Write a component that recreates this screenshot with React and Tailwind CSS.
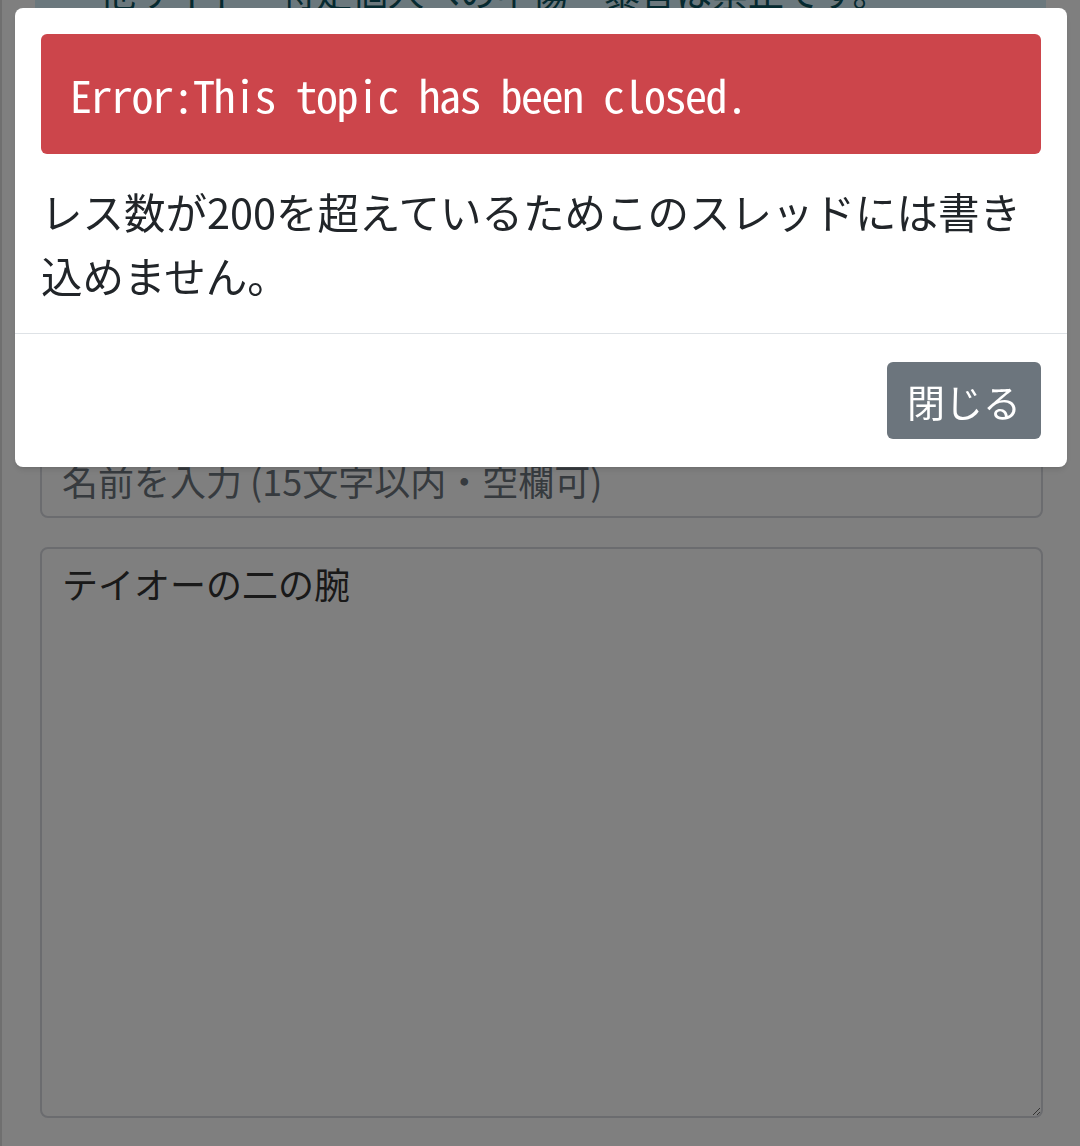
import React from "react";

const jp = "font-['Noto_Sans_CJK_JP','Noto_Sans',sans-serif]";

export default function App() {
  return (
    <div className={`relative min-h-screen overflow-hidden bg-white border-l-2 border-[#dedede] ${jp}`}>
      {/* page behind the dialog */}
      <div className="-mt-[52px] pl-[33px] pr-[34px]">
        <div className="bg-[#d7f0fa] px-[65px] py-[16px] text-[36px] leading-[54px] text-[#0c5460] rounded-md">
          他サイト・特定個人への中傷・暴言は禁止です。
        </div>

        <form className="mt-[408px] flex flex-col gap-[29px] pl-[5px] pr-[3px]">
          <input
            type="text"
            placeholder="名前を入力 (15文字以内・空欄可)"
            className="h-[76px] w-full rounded-lg border-2 border-[#d6d8de] bg-white px-[20px] text-[36px] text-[#333] outline-none placeholder:text-[#6c757d]"
          />
          <textarea
            defaultValue="テイオーの二の腕"
            className="h-[571px] w-full rounded-lg border-2 border-[#d6d8de] bg-white px-[20px] pt-[7px] text-[36px] leading-[54px] text-[#333] outline-none"
          />
        </form>
      </div>

      {/* backdrop */}
      <div className="fixed inset-0 bg-black/50" />

      {/* dialog */}
      <div className="fixed inset-0 pl-[15px] pr-[13px] pt-[8px]">
        <div className="rounded-lg bg-white shadow-md">
          <div className="p-[26px]">
            <div className="flex h-[120px] items-center rounded-md bg-[#cc454b] px-[29px] font-['Noto_Sans_Mono_CJK_JP','DejaVu_Sans_Mono',monospace] text-[44px] tracking-[-1.5px] text-white">
              Error:This topic has been closed.
            </div>
            <p className="mt-[25px] text-[41.5px] leading-[64px] text-[#212529]">
              レス数が200を超えているためこのスレッドには書き込めません。
            </p>
          </div>
          <div className="flex justify-end border-t border-[#dee2e6] px-[26px] py-[28px]">
            <button className="h-[77px] w-[154px] rounded-md bg-[#6c757d] text-[38px] text-white">
              閉じる
            </button>
          </div>
        </div>
      </div>
    </div>
  );
}
